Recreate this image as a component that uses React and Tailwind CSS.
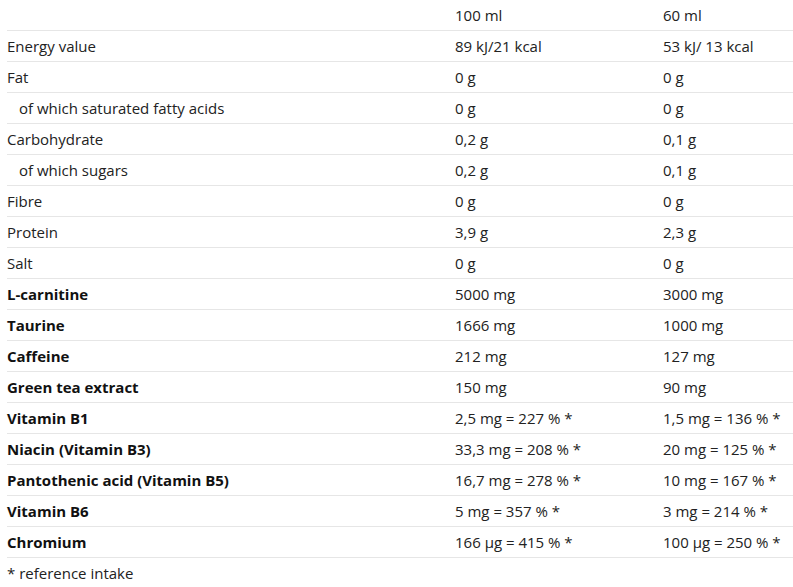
import React from 'react';

const rows = [
  { name: 'Energy value', a: '89 kJ/21 kcal', b: '53 kJ/ 13 kcal' },
  { name: 'Fat', a: '0 g', b: '0 g' },
  { name: 'of which saturated fatty acids', a: '0 g', b: '0 g', indent: true },
  { name: 'Carbohydrate', a: '0,2 g', b: '0,1 g' },
  { name: 'of which sugars', a: '0,2 g', b: '0,1 g', indent: true },
  { name: 'Fibre', a: '0 g', b: '0 g' },
  { name: 'Protein', a: '3,9 g', b: '2,3 g' },
  { name: 'Salt', a: '0 g', b: '0 g' },
  { name: 'L-carnitine', a: '5000 mg', b: '3000 mg', bold: true },
  { name: 'Taurine', a: '1666 mg', b: '1000 mg', bold: true },
  { name: 'Caffeine', a: '212 mg', b: '127 mg', bold: true },
  { name: 'Green tea extract', a: '150 mg', b: '90 mg', bold: true },
  { name: 'Vitamin B1', a: '2,5 mg = 227 % *', b: '1,5 mg = 136 % *', bold: true },
  { name: 'Niacin (Vitamin B3)', a: '33,3 mg = 208 % *', b: '20 mg = 125 % *', bold: true },
  { name: 'Pantothenic acid (Vitamin B5)', a: '16,7 mg = 278 % *', b: '10 mg = 167 % *', bold: true },
  { name: 'Vitamin B6', a: '5 mg = 357 % *', b: '3 mg = 214 % *', bold: true },
  { name: 'Chromium', a: '166 µg = 415 % *', b: '100 µg = 250 % *', bold: true },
];

const App = () => {
  return (
    <div className="min-h-screen bg-white text-[15px] text-[#222] font-['Open_Sans',sans-serif]">
      <div className="ml-[7px]">
        {/* Header */}
        <div className="grid grid-cols-[448px_208px_1fr] h-[31px] items-center border-b border-[#e6e6e6]">
          <div></div>
          <div>100 ml</div>
          <div>60 ml</div>
        </div>

        {rows.map((row, i) => (
          <div
            key={i}
            className="grid grid-cols-[448px_208px_1fr] h-[31px] items-center border-b border-[#e6e6e6]"
          >
            <div className={`${row.indent ? 'pl-3' : ''} ${row.bold ? 'font-bold text-[#111]' : ''}`}>
              {row.name}
            </div>
            <div>{row.a}</div>
            <div>{row.b}</div>
          </div>
        ))}

        <div className="h-[31px] flex items-center">* reference intake</div>
      </div>
    </div>
  );
};

export default App;
